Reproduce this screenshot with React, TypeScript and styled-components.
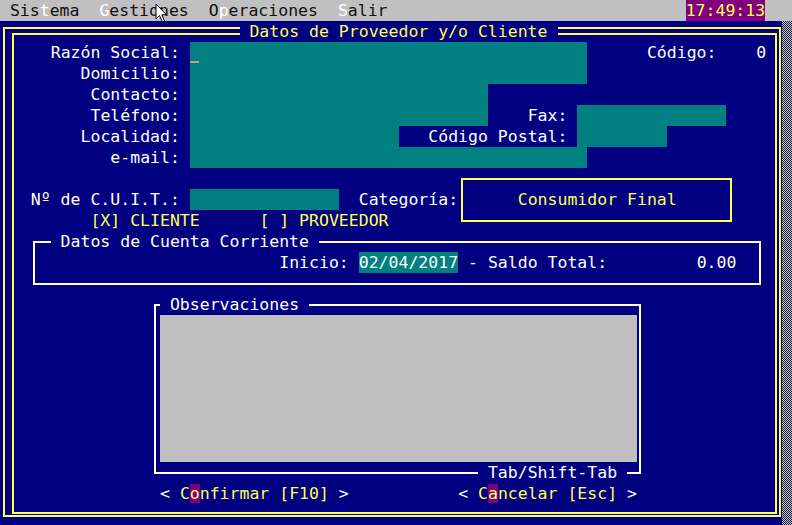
import React from "react";
import styled, { createGlobalStyle, css } from "styled-components";

const BLUE = "#000080";
const TEAL = "#008080";
const GRAY = "#c0c0c0";
const YELLOW = "#ffff55";
const WHITE = "#ffffff";
const PURPLE = "#800080";

// text-mode screen: columns of 9.95px, rows of 21px
type Place = { $c: number; $w: number; $r?: number; $h?: number };

const place = css<Place>`
  grid-column: ${(p) => p.$c + 1} / span ${(p) => p.$w};
  grid-row: ${(p) => p.$r ?? 1} / span ${(p) => p.$h ?? 1};
`;

const GlobalStyle = createGlobalStyle`
  html, body {
    margin: 0;
    padding: 0;
    background: ${BLUE};
  }
  body {
    font-family: "DejaVu Sans Mono", "Liberation Mono", monospace;
    font-size: 16.5px;
    line-height: 21px;
  }
`;

const Screen = styled.div`
  position: relative;
  width: 792px;
  height: 525px;
  overflow: hidden;
  display: flex;
  flex-direction: column;
  white-space: pre;
`;

const MenuBar = styled.div`
  flex: none;
  height: 21px;
  background: ${GRAY};
  color: #101010;
  display: grid;
  grid-template-columns: repeat(80, 9.95px);
`;

const MenuItem = styled.span<Place>`
  ${place}
`;

const Hot = styled.span`
  color: ${WHITE};
`;

const Clock = styled.span<Place>`
  ${place}
  background: ${PURPLE};
  color: ${YELLOW};
`;

const Desk = styled.div`
  flex: 1;
  display: flex;
`;

const Window = styled.div`
  width: 782px;
  height: 504px;
  box-sizing: border-box;
  padding-left: 1px;
  background: ${BLUE};
  color: ${WHITE};
  display: grid;
  grid-template-columns: repeat(79, 9.95px);
  grid-template-rows: repeat(24, 21px);
`;

const Shadow = styled.div`
  flex: 1;
  background-color: ${GRAY};
  background-image: repeating-conic-gradient(#1c1c48 0 25%, transparent 0 50%);
  background-size: 2px 2px;
`;

const DoubleFrame = styled.div`
  grid-column: 1 / -1;
  grid-row: 1 / -1;
  margin: 6px 5px 8px 2px;
  border: 2px solid ${YELLOW};
  padding: 4px 2px 1px 7px;
  display: flex;
`;

const InnerFrame = styled.div`
  flex: 1;
  border: 2px solid ${YELLOW};
`;

const Title = styled.div<Place>`
  ${place}
  background: ${BLUE};
  color: ${YELLOW};
`;

const Box = styled.div<Place & { $m: string; $line: string }>`
  ${place}
  margin: ${(p) => p.$m};
  border: 2px solid ${(p) => p.$line};
`;

const Caption = styled.div<Place>`
  ${place}
  background: ${BLUE};
`;

const Label = styled.div<Place>`
  ${place}
  text-align: right;
`;

const Text = styled.div<Place & { $yellow?: boolean }>`
  ${place}
  color: ${(p) => (p.$yellow ? YELLOW : WHITE)};
`;

const Field = styled.div<Place>`
  ${place}
  background: ${TEAL};
  color: ${WHITE};
`;

const Caret = styled.span`
  display: block;
  width: 9px;
  height: 2px;
  margin-top: 19px;
  background: #e8907a;
`;

const Memo = styled.div<Place>`
  ${place}
  background: ${GRAY};
`;

const Button = styled.div<Place>`
  ${place}
  color: ${YELLOW};
`;

const Bracket = styled.span`
  color: ${WHITE};
`;

const Key = styled.span`
  background: ${PURPLE};
`;

const Pointer = styled.svg`
  position: absolute;
  left: 155px;
  top: 3px;
`;

export default function App() {
  return (
    <Screen>
      <GlobalStyle />
      <MenuBar>
        <MenuItem $c={1} $w={7}>
          Sis<Hot>t</Hot>ema
        </MenuItem>
        <MenuItem $c={10} $w={9}>
          <Hot>G</Hot>estiones
        </MenuItem>
        <MenuItem $c={21} $w={11}>
          O<Hot>p</Hot>eraciones
        </MenuItem>
        <MenuItem $c={34} $w={5}>
          <Hot>S</Hot>alir
        </MenuItem>
        <Clock $c={69} $w={8}>17:49:13</Clock>
      </MenuBar>

      <Desk>
        <Window>
          <DoubleFrame>
            <InnerFrame />
          </DoubleFrame>
          <Title $c={24} $w={32} $r={1}>
            {" Datos de Proveedor y/o Cliente "}
          </Title>

          <Label $c={1} $w={17} $r={2}>Razón Social:</Label>
          <Field $c={19} $w={40} $r={2}>
            <Caret />
          </Field>
          <Text $c={65} $w={12} $r={2}>
            {"Código:    0"}
          </Text>

          <Label $c={1} $w={17} $r={3}>Domicilio:</Label>
          <Field $c={19} $w={40} $r={3} />

          <Label $c={1} $w={17} $r={4}>Contacto:</Label>
          <Field $c={19} $w={30} $r={4} />

          <Label $c={1} $w={17} $r={5}>Teléfono:</Label>
          <Field $c={19} $w={30} $r={5} />
          <Text $c={53} $w={4} $r={5}>Fax:</Text>
          <Field $c={58} $w={15} $r={5} />

          <Label $c={1} $w={17} $r={6}>Localidad:</Label>
          <Field $c={19} $w={21} $r={6} />
          <Text $c={43} $w={14} $r={6}>Código Postal:</Text>
          <Field $c={58} $w={9} $r={6} />

          <Label $c={1} $w={17} $r={7}>e-mail:</Label>
          <Field $c={19} $w={40} $r={7} />

          <Text $c={3} $w={15} $r={9}>Nº de C.U.I.T.:</Text>
          <Field $c={19} $w={15} $r={9} />
          <Text $c={36} $w={10} $r={9}>Categoría:</Text>
          <Box $c={46} $w={28} $r={8} $h={3} $m="10px 4px 9px 3px" $line={YELLOW} />
          <Text $c={52} $w={16} $r={9} $yellow>
            Consumidor Final
          </Text>

          <Text $c={9} $w={11} $r={10} $yellow>
            [X] CLIENTE
          </Text>
          <Text $c={26} $w={13} $r={10} $yellow>
            [ ] PROVEEDOR
          </Text>

          <Box $c={3} $w={74} $r={11} $h={3} $m="10px 5px 9px 2px" $line={WHITE} />
          <Caption $c={5} $w={27} $r={11}>
            {" Datos de Cuenta Corriente "}
          </Caption>
          <Text $c={28} $w={8} $r={12}>Inicio:</Text>
          <Field $c={36} $w={10} $r={12}>
            02/04/2017
          </Field>
          <Text $c={47} $w={14} $r={12}>
            - Saldo Total:
          </Text>
          <Text $c={70} $w={4} $r={12}>0.00</Text>

          <Box $c={15} $w={50} $r={14} $h={9} $m="10px 6px 9px 4px" $line={WHITE} />
          <Caption $c={16} $w={15} $r={14}>
            {" Observaciones "}
          </Caption>
          <Memo $c={16} $w={48} $r={15} $h={7} />
          <Caption $c={48} $w={15} $r={22}>
            {" Tab/Shift-Tab "}
          </Caption>

          <Button $c={16} $w={19} $r={23}>
            <Bracket>{"< "}</Bracket>C<Key>o</Key>nfirmar [F10]<Bracket>{" >"}</Bracket>
          </Button>
          <Button $c={46} $w={18} $r={23}>
            <Bracket>{"< "}</Bracket>C<Key>a</Key>ncelar [Esc]<Bracket>{" >"}</Bracket>
          </Button>
        </Window>
        <Shadow />
      </Desk>

      <Pointer width="13" height="20" viewBox="0 0 13 20">
        <path
          d="M1 1 L1 16 L4.5 12.5 L7.5 19 L9.5 18 L6.8 11.8 L11.5 11.8 Z"
          fill="#ffffff"
          stroke="#000000"
          strokeWidth="1"
          strokeLinejoin="round"
        />
      </Pointer>
    </Screen>
  );
}
